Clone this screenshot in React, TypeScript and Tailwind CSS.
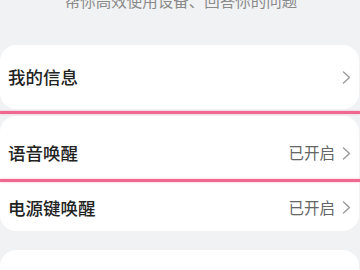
const Chevron = () => (
  <svg width="9" height="13" viewBox="0 0 9 13" fill="none" className="shrink-0">
    <polyline points="1.5,1 7.5,6.5 1.5,12" stroke="#9a9a9a" strokeWidth="1.4" strokeLinecap="round" strokeLinejoin="round" />
  </svg>
);

const Row = ({ title, value, className }: { title: string; value?: string; className?: string }) => (
  <div className={`flex items-center justify-between pl-[8px] pr-[8px] ${className ?? ''}`}>
    <span className="text-[17.5px] font-medium text-[#222] leading-none">{title}</span>
    <div className="flex items-center gap-[7px]">
      {value && <span className="text-[15.5px] text-[#666] leading-none">{value}</span>}
      <Chevron />
    </div>
  </div>
);

const App = () => {
  return (
    <div
      className="relative flex flex-col w-[360px] h-[270px] overflow-hidden bg-[#f1f2f4]"
      style={{ fontFamily: '"Noto Sans CJK SC", "Noto Sans", sans-serif' }}
    >
      {/* subtitle, cut off at the top */}
      <div className="flex flex-col h-[45px] shrink-0">
        <p className="-mt-[11px] text-center text-[15.5px] leading-[22px] text-[#8a8a8a] pl-[2px]">
          帮你高效使用设备、回答你的问题
        </p>
      </div>

      {/* my info */}
      <div className="mr-[1px] shrink-0 rounded-[16px] bg-white">
        <Row title="我的信息" className="h-[64px]" />
      </div>

      {/* wake-up options */}
      <div className="mt-[7px] mr-[1px] shrink-0 rounded-[16px] bg-white">
        <Row title="语音唤醒" value="已开启" className="h-[64px] pt-[10px]" />
        <Row title="电源键唤醒" value="已开启" className="h-[51px] pt-[4px]" />
      </div>

      <div className="mt-[19px] mr-[1px] h-[40px] shrink-0 rounded-t-[16px] bg-white" />

      {/* highlight marks */}
      <div className="absolute left-0 right-0 top-[111px] h-[3px] bg-[#f0688f] shadow-[0_0_2px_#f7a9c0]" />
      <div className="absolute left-0 right-0 top-[179px] h-[3px] bg-[#f0688f] shadow-[0_0_2px_#f7a9c0]" />
    </div>
  );
};

export default App;
